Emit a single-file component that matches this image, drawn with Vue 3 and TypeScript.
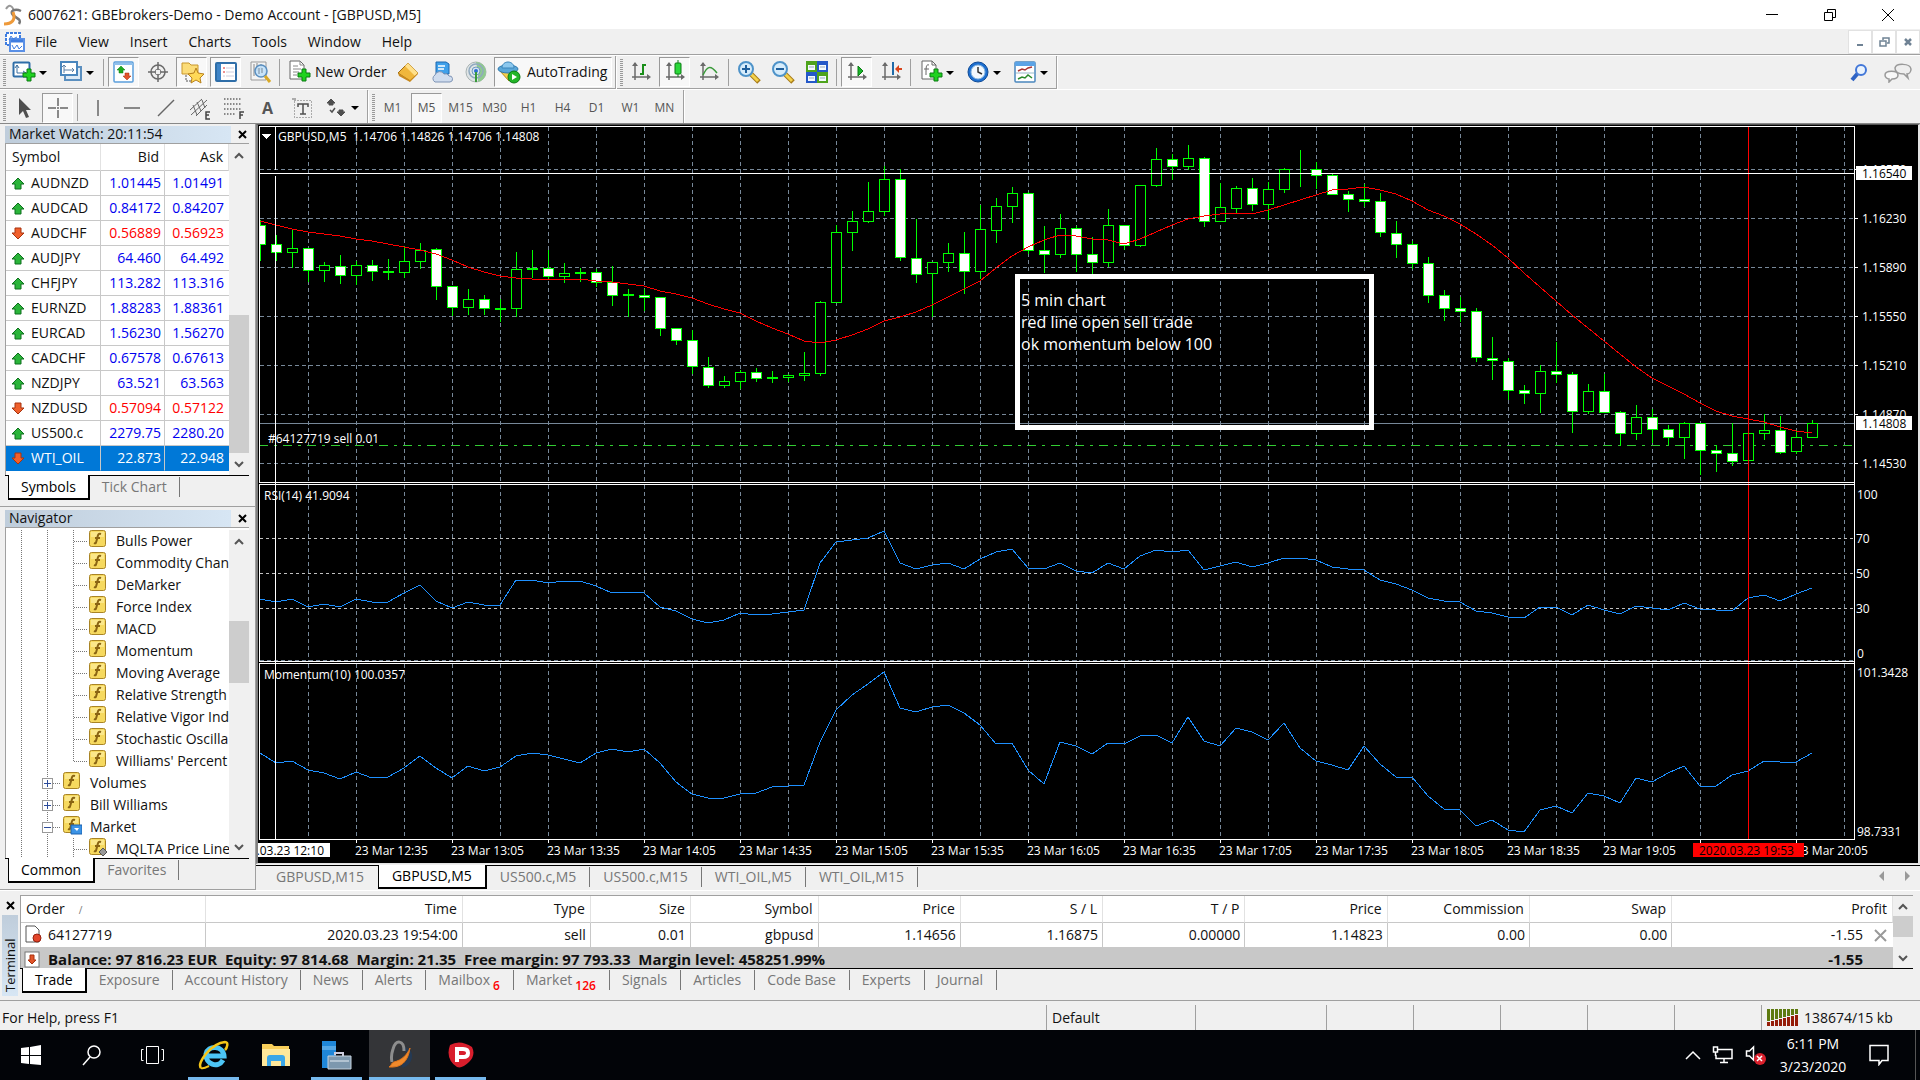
<script setup lang="ts">
type Tool = { icon?: string; label?: string; text?: string; pressed?: boolean; drop?: boolean; sep?: boolean; name?: string }

const axes = '<path d="M6 3v17M3 17h17" stroke="#6a6a6a" stroke-width="1.500"/><path d="M3 6l3-4 3 4zM18 14l4 3-4 3z" fill="#6a6a6a"/>'
const plus = '<path d="M15 9h4v4h4v4h-4v4h-4v-4h-4v-4h4z" fill="#1fd21f" stroke="#0a7a12"/>'
const icons: Record<string, string> = {
  newChart: '<rect x="1.500" y="2.500" width="16" height="14" rx="1" fill="#fff" stroke="#2f6ea8" stroke-width="2"/><path d="M5 5v8h9M3 8l2-3 2 3M11 11l3 2-3 2" fill="none" stroke="#3b6f9f"/>' + plus,
  profiles: '<rect x="6" y="7" width="16" height="13" fill="#dce9f5" stroke="#5b8fbf" stroke-width="2"/><rect x="2" y="2" width="16" height="13" fill="#fff" stroke="#4a86bd" stroke-width="2"/><path d="M5 5v8M5 10h10M3 7l2-2 2 2M13 8l2 2-2 2" fill="none" stroke="#5b7fa5"/>',
  market: '<rect x="2" y="2" width="19" height="20" rx="1" fill="#fff" stroke="#5b9fdc" stroke-width="1.500"/><path d="M2 4h19" stroke="#8fc0ec" stroke-width="2"/><path d="M9 6l4 4h-2v3H7v-3H5z" fill="#1faa1f" stroke="#0a7a12" stroke-width=".5"/><path d="M15 20l-4-4h2v-3h4v3h2z" fill="#e2532a" stroke="#a02a0a" stroke-width=".5"/>',
  target: '<circle cx="12" cy="12" r="7" fill="none" stroke="#6a6a6a" stroke-width="1.500"/><circle cx="12" cy="12" r="3" fill="none" stroke="#888"/><path d="M12 2v8M12 14v8M2 12h8M14 12h8" stroke="#6a6a6a" stroke-width="1.500"/>',
  navigator: '<path d="M2 3h7l2 2h7v9H2z" fill="#fbdc78" stroke="#c8962c"/><path d="M6 15v6h6" fill="none" stroke="#555" stroke-dasharray="2 1"/><path d="M16 8l2 5 6 1-4 4 1 5-5-3-5 3 1-5-4-4 6-1z" fill="#ffd957" stroke="#b9811c"/>',
  terminal: '<rect x="2" y="3" width="20" height="18" rx="1" fill="#fff" stroke="#2f6ea8" stroke-width="2"/><path d="M3 4h4v16H3z" fill="#3f85c8"/><path d="M9 8h2M9 12h2" stroke="#d22"/><path d="M12 8h8M12 12h8M12 16h8M9 16h2" stroke="#ccd"/>',
  tester: '<path d="M3 2h15v18H3z" fill="#f4f4f4" stroke="#999"/><path d="M6 4v12M9 3v8M13 4v6" stroke="#888"/><circle cx="13" cy="11" r="6" fill="#bfe0fa" fill-opacity=".85" stroke="#5a8fc0" stroke-width="1.500"/><path d="M11 8v6M14 8v5" stroke="#789"/><path d="M17 16l5 6" stroke="#d8a928" stroke-width="3"/>',
  newOrder: '<path d="M3 1h10l4 4v14H3z" fill="#fff" stroke="#666"/><path d="M13 1v4h4M6 6h5M6 9h8M6 12h6M6 15h4" fill="none" stroke="#888"/>' + plus,
  book: '<path d="M2 13L12 3l10 10-8 8z" fill="#f0b73c" stroke="#a36d12"/><path d="M12 3l10 10-3 3L9 6z" fill="#ffe08a"/><path d="M2 13l1 3 11 6 8-8v-1l-8 7z" fill="#c98a1e"/>',
  cloud: '<path d="M6 2h10l3 2v10H6z" fill="#3fa0ea" stroke="#1c68b0"/><path d="M8 6h7M8 9h6" stroke="#fff" stroke-width="1.500"/><path d="M5 22a4 4 0 0 1 0-7 5 5 0 0 1 9-1 4 4 0 0 1 5 2 3 3 0 0 1 1 6z" fill="#cfdcee" stroke="#7d93b5"/>',
  signal: '<circle cx="12" cy="12" r="10" fill="#dfe4e6" stroke="#aab4b4"/><path d="M12 2a10 10 0 0 1 2 19.800V12z" fill="#8fca8f"/><circle cx="12" cy="11" r="7" fill="none" stroke="#8fa9bf" stroke-width="1.500"/><circle cx="12" cy="11" r="4" fill="#d5e2f2" stroke="#6e9abf"/><circle cx="12" cy="11" r="2" fill="#2b6fd0"/><path d="M12 12v10" stroke="#3a9a3a" stroke-width="2"/>',
  auto: '<path d="M3 11l9 10 8-9z" fill="#f6cf4b" stroke="#b58a1c"/><ellipse cx="11" cy="9" rx="10" ry="4" fill="#5aa7d8" stroke="#2e78ae"/><path d="M5 8c0-8 12-8 12 0z" fill="#8cc8ee" stroke="#3b86bb"/><circle cx="17" cy="17" r="6" fill="#22b528" stroke="#0a7a12"/><path d="M15 14l5 3-5 3z" fill="#fff"/>',
  bars: axes + '<path d="M14 4v11M14 5h3M11 14h3" stroke="#1a8f1a" stroke-width="2"/>',
  candle: axes + '<path d="M15 0v17" stroke="#0a7a12"/><rect x="12" y="3" width="6" height="11" rx="1" fill="#2bd83a" stroke="#0a7a12"/>',
  line: axes + '<path d="M6 15C10 7 13 4 20 13" fill="none" stroke="#3a9a3a" stroke-width="1.500"/>',
  zoomIn: '<path d="M14 14l8 8" stroke="#a77b17" stroke-width="5"/><path d="M14 14l7 7" stroke="#f4d24c" stroke-width="3"/><circle cx="9" cy="9" r="7" fill="#d6ecfb" stroke="#4e93c9" stroke-width="2"/><path d="M9 5v8M5 9h8" stroke="#1f5f9c" stroke-width="2"/>',
  zoomOut: '<path d="M14 14l8 8" stroke="#a77b17" stroke-width="5"/><path d="M14 14l7 7" stroke="#f4d24c" stroke-width="3"/><circle cx="9" cy="9" r="7" fill="#d6ecfb" stroke="#4e93c9" stroke-width="2"/><path d="M5 9h8" stroke="#1f5f9c" stroke-width="2"/>',
  tile: '<path d="M1 1h11v11H1zM12 12h11v11H12z" fill="#4ea31c"/><path d="M12 1h11v11H12zM1 12h11v11H1z" fill="#2458c8"/><path d="M3 5h7v5H3zM14 5h7v5h-7zM3 16h7v5H3zM14 16h7v5h-7z" fill="#f4faff"/><path d="M4 7h5M15 7h5M4 18h5M15 18h5" stroke="#9ab"/>',
  scroll: axes + '<path d="M13 6l5 5-5 5z" fill="#18b52a" stroke="#0a7a12"/>',
  shift: axes + '<path d="M14 2v13" stroke="#1e6aa8" stroke-width="2"/><path d="M16 9l4-4v3h3v2h-3v3z" fill="#d8441c"/>',
  indicator: '<path d="M3 1h10l4 4v14H3z" fill="#fff" stroke="#666"/><path d="M13 1v4h4M10 5c-3-1-3 2-3 10M5 9h5" fill="none" stroke="#666"/>' + plus,
  clock: '<circle cx="12" cy="12" r="10" fill="#1d6fd0" stroke="#0e4a96"/><circle cx="12" cy="12" r="7" fill="#f2f8fd" stroke="#8ab8e0"/><path d="M12 7v5l4 2" fill="none" stroke="#333" stroke-width="1.500"/>',
  template: '<rect x="2" y="2" width="20" height="20" rx="1" fill="#fff" stroke="#4a86bd" stroke-width="1.500"/><path d="M2 4h20" stroke="#5ba3e6" stroke-width="4"/><path d="M3 13h18" stroke="#9bc"/><path d="M5 11l4-2 3 1 3-2 4-1" fill="none" stroke="#a33" stroke-width="1.500"/><path d="M5 19l4-2 3 1 3-3 4 3" fill="none" stroke="#2a8a2a" stroke-width="1.500"/>',
  cursor: '<path d="M7 2v17l4-4 3 7 3-1-3-7h5z" fill="#4f4f4f"/>',
  cross: '<path d="M12 2v8M12 14v8M2 12h8M14 12h8M12 11v2" stroke="#666" stroke-width="1.500"/>',
  vline: '<path d="M12 4v16" stroke="#666" stroke-width="1.500"/>',
  hline: '<path d="M4 12h16" stroke="#666" stroke-width="1.500"/>',
  trend: '<path d="M4 20L20 4" stroke="#666" stroke-width="1.500"/>',
  channel: '<path d="M2 14L14 3M3 19L19 4M8 20l11-11M5 9l4 10M9 6l4 9M14 4l3 8" stroke="#666"/><path d="M22 16h-4v7h4M18 19h3" fill="none" stroke="#444" stroke-width="1.500"/>',
  fibo: '<path d="M2 3h18M2 8h18M2 13h18M2 18h12" stroke="#666" stroke-width="1.500" stroke-dasharray="1.500 1.500"/><path d="M22 16h-4v7M18 19h3" fill="none" stroke="#444" stroke-width="1.500"/>',
  label: '<rect x="4.500" y="4.500" width="17" height="17" fill="none" stroke="#666" stroke-dasharray="1 2"/><path d="M8 11V8h10v3M13 8v10M10 18h6" fill="none" stroke="#4f4f4f" stroke-width="1.500"/><path d="M2 3h4" stroke="#666"/>',
  arrows: '<path d="M7 3l4 4H9v2H5V7H3zM17 20l-4-4h2v-2h4v2h2z" fill="#4f4f4f" stroke="#4f4f4f"/><path d="M6 14l2 2 3-4" fill="none" stroke="#4f4f4f" stroke-width="1.500"/>',
}
const bar1: Tool[] = [
  { icon: 'newChart', drop: true, name: 'New chart' }, { icon: 'profiles', drop: true, name: 'Profiles' }, { sep: true },
  { icon: 'market', pressed: true, name: 'Market Watch' }, { icon: 'target', name: 'Data Window' },
  { icon: 'navigator', pressed: true, name: 'Navigator' }, { icon: 'terminal', pressed: true, name: 'Terminal' },
  { icon: 'tester', name: 'Strategy Tester' }, { sep: true },
  { icon: 'newOrder', label: 'New Order' }, { icon: 'book', name: 'MetaEditor' }, { icon: 'cloud', name: 'Hosting' },
  { icon: 'signal', name: 'Signals' }, { icon: 'auto', label: 'AutoTrading', pressed: true },
]
const bar2: Tool[] = [
  { icon: 'bars', name: 'Bar chart' }, { icon: 'candle', pressed: true, name: 'Candlesticks' }, { icon: 'line', name: 'Line chart' }, { sep: true },
  { icon: 'zoomIn', name: 'Zoom in' }, { icon: 'zoomOut', name: 'Zoom out' }, { icon: 'tile', name: 'Tile windows' }, { sep: true },
  { icon: 'scroll', pressed: true, name: 'Auto scroll' }, { icon: 'shift', name: 'Chart shift' }, { sep: true },
  { icon: 'indicator', drop: true, name: 'Indicators' }, { icon: 'clock', drop: true, name: 'Periods' }, { icon: 'template', drop: true, name: 'Templates' },
]
const bar3: Tool[] = [
  { icon: 'cursor', name: 'Cursor' }, { icon: 'cross', pressed: true, name: 'Crosshair' }, { sep: true },
  { icon: 'vline', name: 'Vertical line' }, { icon: 'hline', name: 'Horizontal line' }, { icon: 'trend', name: 'Trendline' },
  { icon: 'channel', name: 'Equidistant channel' }, { icon: 'fibo', name: 'Fibonacci' }, { text: 'A', name: 'Text' },
  { icon: 'label', name: 'Text label' }, { icon: 'arrows', drop: true, name: 'Arrows' },
]
const bar4: Tool[] = ['M1', 'M5', 'M15', 'M30', 'H1', 'H4', 'D1', 'W1', 'MN'].map(t => ({ text: t, name: t, pressed: t === 'M5' }))
const toolRows = [[bar1, bar2], [bar3, bar4]]
const menus = ['File', 'View', 'Insert', 'Charts', 'Tools', 'Window', 'Help']

const quotes: [string, string, string, boolean][] = [
  ['AUDNZD', '1.01445', '1.01491', true], ['AUDCAD', '0.84172', '0.84207', true], ['AUDCHF', '0.56889', '0.56923', false],
  ['AUDJPY', '64.460', '64.492', true], ['CHFJPY', '113.282', '113.316', true], ['EURNZD', '1.88283', '1.88361', true],
  ['EURCAD', '1.56230', '1.56270', true], ['CADCHF', '0.67578', '0.67613', true], ['NZDJPY', '63.521', '63.563', true],
  ['NZDUSD', '0.57094', '0.57122', false], ['US500.c', '2279.75', '2280.20', true], ['WTI_OIL', '22.873', '22.948', false],
]
const tree = [
  ...['Bulls Power', 'Commodity Chan', 'DeMarker', 'Force Index', 'MACD', 'Momentum', 'Moving Average',
    'Relative Strength', 'Relative Vigor Ind', 'Stochastic Oscilla', "Williams' Percent"].map((t, i) => ({ t, kind: i === 10 ? 'last' : 'leaf' })),
  { t: 'Volumes', kind: 'plus' }, { t: 'Bill Williams', kind: 'plus' }, { t: 'Market', kind: 'minus' }, { t: 'MQLTA Price Line', kind: 'ex' },
]

// Candles, oldest first: high, body top, body bottom, low, and 1 for a falling bar.
const candles: number[][] = [
  [94,99,118,134,1],[109,118,126,134,1],[104,122,126,141,0],[122,122,144,155,1],[136,139,144,155,0],[129,140,149,157,1],[135,139,149,158,0],
  [134,139,145,154,1],[133,145,146,153,0],[120,135,146,151,0],[117,124,135,142,0],[122,123,160,173,1],[160,160,181,189,1],[163,173,181,188,0],
  [169,173,182,188,1],[173,182,183,195,0],[126,143,182,190,0],[124,142,143,151,0],[124,142,150,152,1],[137,147,150,156,0],[142,146,147,155,0],
  [143,146,156,160,1],[140,156,169,179,1],[163,168,169,190,0],[163,169,171,184,1],[171,171,202,209,1],[202,202,214,218,1],[204,214,240,247,1],
  [231,241,259,261,1],[250,255,259,261,0],[244,246,255,262,0],[242,246,252,255,1],[245,251,252,256,0],[248,249,251,255,0],[226,247,249,254,0],
  [175,176,247,249,0],[99,106,176,176,0],[85,95,106,124,0],[56,85,95,96,0],[40,53,85,89,0],[43,53,131,134,1],[93,132,148,156,1],
  [136,136,147,190,0],[117,127,136,145,0],[106,127,145,167,1],[79,103,145,152,0],[72,80,104,116,0],[61,67,80,96,0],[66,67,124,127,1],
  [100,124,128,146,1],[88,102,128,131,0],[100,102,128,145,1],[111,128,136,149,1],[83,99,136,140,0],[99,99,119,123,1],[59,59,119,120,0],
  [22,33,59,60,0],[28,33,40,53,1],[19,32,40,43,0],[31,32,95,100,1],[57,81,95,95,0],[60,62,82,86,0],[52,62,78,84,1],[56,63,78,93,0],
  [42,43,63,66,0],[24,43,43,60,0],[36,43,49,62,1],[47,49,68,68,1],[65,68,73,85,1],[58,73,75,80,1],[67,75,106,110,1],[95,107,118,131,1],
  [115,118,137,142,1],[131,137,169,176,1],[164,169,182,194,1],[171,182,185,195,1],[182,185,231,235,1],[211,232,234,253,1],[232,235,264,273,1],
  [259,264,267,277,1],[239,245,267,286,0],[216,245,248,256,1],[246,248,285,306,1],[258,265,285,287,0],[248,265,286,286,1],[285,286,307,319,1],
  [279,291,307,313,0],[283,291,303,316,1],[299,303,311,318,1],[296,297,311,332,0],[297,297,324,348,1],[319,324,327,345,1],[297,327,335,339,1],
  [307,307,334,334,0],[288,304,307,313,0],[290,304,326,327,1],[304,311,325,327,0],[294,297,311,311,0],
]
// Indicator samples, one per bar, in thirds of a pixel from the top of their scale.
const ma = [304,316,326,337,343,349,357,364,373,382,391,403,421,440,455,469,473,476,478,478,478,482,487,491,499,514,523,535,553,568,580,602,625,643,664,669,661,646,627,603,592,577,555,530,508,482,445,408,382,360,346,349,358,361,373,358,337,315,298,289,283,280,283,271,254,240,226,211,208,200,209,223,244,271,289,311,343,374,415,460,500,542,584,624,664,703,740,773,799,823,850,872,889,898,907,922,934,938]
const rsi = [358,367,358,382,373,382,358,367,367,340,316,363,385,367,376,376,301,301,310,304,304,319,340,337,340,381,394,418,430,421,400,406,403,397,390,249,187,181,173,154,249,268,256,250,268,237,217,208,264,268,250,272,280,250,268,227,211,217,211,271,259,247,262,250,235,235,241,262,268,269,299,313,329,355,364,367,393,398,411,415,382,382,406,376,391,403,379,385,391,370,387,391,394,353,346,364,343,323]
const momentum = [820,850,844,871,880,898,877,895,891,865,829,865,894,859,874,861,829,820,826,838,850,818,808,817,808,850,907,941,955,955,943,940,922,919,915,785,691,645,612,577,684,697,682,676,700,736,793,790,871,913,787,798,823,790,793,769,766,790,712,784,799,745,755,781,730,804,842,856,871,799,851,892,892,949,988,991,1039,1021,1051,1055,991,979,1000,940,949,970,895,907,880,859,919,919,884,874,844,847,847,820]
const barStep = 16
const path = (v: number[], top: number) => v.map((p, i) => `${1 + i * barStep},${Math.round(p / 3 + top)}`).join(' ')
const gridX = Array.from({ length: 33 }, (_, i) => 49 + i * 48)
const prices: [string, number][] = [['1.16570', 43], ['1.16230', 92], ['1.15890', 141], ['1.15550', 190], ['1.15210', 239], ['1.14870', 288], ['1.14530', 337]]
const panes = [[0, 356], [358, 177], [537, 176]]
const times = Array.from({ length: 16 }, (_, i) => {
  const m = 12 * 60 + 35 + i * 30
  return { x: 97 + i * 96, t: i === 14 ? '' : `23 Mar ${Math.floor(m / 60)}:${String(m % 60).padStart(2, '0')}` }
})
const chartTabs = ['GBPUSD,M15', 'GBPUSD,M5', 'US500.c,M5', 'US500.c,M15', 'WTI_OIL,M5', 'WTI_OIL,M15']
const orderHead = ['Time', 'Type', 'Size', 'Symbol', 'Price', 'S / L', 'T / P', 'Price', 'Commission', 'Swap']
const orderRow = ['2020.03.23 19:54:00', 'sell', '0.01', 'gbpusd', '1.14656', '1.16875', '0.00000', '1.14823', '0.00', '0.00']
const bottomTabs: [string, string?][] = [['Trade'], ['Exposure'], ['Account History'], ['News'], ['Alerts'], ['Mailbox', '6'], ['Market', '126'], ['Signals'], ['Articles'], ['Code Base'], ['Experts'], ['Journal']]
</script>

<template>
  <div class="app">
    <header class="titlebar">
      <svg width="20" height="22" viewBox="0 0 20 22"><path d="M3 5c3-5 6-4 8 2" fill="none" stroke="#999" stroke-width="2" /><path d="M18 7c-6-3-12 0-8 4s9 4 6 9" fill="none" stroke="#777" stroke-width="2.500" /><path d="M1 20c8 0 12-4 9-12" fill="none" stroke="#ee9a3a" stroke-width="3" /></svg>
      <h1>6007621: GBEbrokers-Demo - Demo Account - [GBPUSD,M5]</h1>
      <div class="winbtns">
        <button aria-label="Minimize"><svg width="14" height="14"><path d="M1 6.500h12" stroke="#000" /></svg></button>
        <button aria-label="Restore"><svg width="14" height="14"><path d="M1.500 4.500h8v8h-8zM4.500 4V1.500h8v8H10" fill="none" stroke="#000" /></svg></button>
        <button aria-label="Close"><svg width="14" height="14"><path d="M1 1l12 12M13 1L1 13" stroke="#000" /></svg></button>
      </div>
    </header>
    <nav class="menubar">
      <svg width="22" height="22" viewBox="0 0 22 22"><rect x="2" y="2" width="14" height="12" fill="#fff" stroke="#3f7de0" stroke-width="2" stroke-dasharray="3 1" /><rect x="6" y="8" width="14" height="12" fill="#fff" stroke="#5a90e6" stroke-width="2" /><path d="M7 10h12" stroke="#3f7de0" stroke-width="3" /><path d="M8 14l2 4 3-4 2 4 3-3M5 9l2-4 2 3 4-2" fill="none" stroke="#3f7de0" /></svg>
      <a v-for="m in menus" :key="m" href="#">{{ m }}</a>
      <div class="mdi">
        <button aria-label="Minimize chart"><svg width="12" height="12"><path d="M3 9h6" stroke="#6f8294" stroke-width="2" /></svg></button>
        <button aria-label="Restore chart"><svg width="12" height="12"><path d="M2 5h6v5H2zM5 4V2h6v5H9" fill="none" stroke="#6f8294" stroke-width="1.500" /></svg></button>
        <button aria-label="Close chart"><svg width="12" height="12"><path d="M3 3l6 6M9 3L3 9" stroke="#6f8294" stroke-width="2.500" /></svg></button>
      </div>
    </nav>
    <div v-for="(row, r) in toolRows" :key="r" class="toolrow">
      <div v-for="(bar, b) in row" :key="b" class="tools">
        <i class="grip"></i>
        <template v-for="(t, i) in bar" :key="i">
          <i v-if="t.sep" class="sep"></i>
          <button v-else :aria-label="t.name" :class="{ pressed: t.pressed, drop: t.drop, wide: t.label, glyph: t.text === 'A' }">
            <svg v-if="t.icon" width="24" height="24" viewBox="0 0 24 24" v-html="icons[t.icon]"></svg>
            <span v-if="t.label">{{ t.label }}</span>
            <template v-if="t.text">{{ t.text }}</template>
            <i v-if="t.drop" class="caret"></i>
          </button>
        </template>
      </div>
      <div v-if="r === 0" class="toolright">
        <button aria-label="Search"><svg width="18" height="18" viewBox="0 0 18 18"><path d="M2 16l6-7" stroke="#2f63c4" stroke-width="4" /><circle cx="11" cy="6" r="5" fill="#eaf3fd" stroke="#4277d8" stroke-width="2" /></svg></button>
        <button aria-label="Chat"><svg width="28" height="20" viewBox="0 0 28 20"><path d="M11 5c1-5 15-5 16 1 0 3-2 5-4 5l1 4-4-4c-6 0-9-2-9-6z" fill="#eee" stroke="#999" stroke-width="1.500" /><path d="M1 12c0-5 13-5 13 0 0 3-3 4-6 4l-3 3v-3c-2 0-4-2-4-4z" fill="#f8f8f8" stroke="#999" stroke-width="1.500" /></svg></button>
      </div>
    </div>

    <main class="workspace">
      <aside>
        <section class="panel">
          <div class="phead"><h2>Market Watch: 20:11:54</h2><button aria-label="Close Market Watch"><svg width="9" height="9"><path d="M1 1l7 7M8 1L1 8" stroke="#000" stroke-width="2" /></svg></button></div>
          <div class="pbody">
            <table class="quotes">
              <thead><tr><th>Symbol</th><th>Bid</th><th>Ask</th></tr></thead>
              <tbody>
                <tr v-for="q in quotes" :key="q[0]" :class="{ down: !q[3], sel: q[0] === 'WTI_OIL' }">
                  <td><svg width="14" height="13" viewBox="0 0 14 13"><path v-if="q[3]" d="M7 1l6 6h-3v5H4V7H1z" fill="#2bb53a" stroke="#0c6e1c" /><path v-else d="M7 12l6-6h-3V1H4v5H1z" fill="#f0602c" stroke="#a8330e" /></svg>{{ q[0] }}</td>
                  <td>{{ q[1] }}</td><td>{{ q[2] }}</td>
                </tr>
              </tbody>
            </table>
            <div class="scroll"><button aria-label="Scroll up"><svg width="10" height="7"><path d="M1 6l4-4 4 4" fill="none" stroke="#555" stroke-width="2" /></svg></button><i class="track"><b class="thumb t1"></b></i><button aria-label="Scroll down"><svg width="10" height="7"><path d="M1 1l4 4 4-4" fill="none" stroke="#555" stroke-width="2" /></svg></button></div>
          </div>
          <div class="tabs"><button class="on">Symbols</button><button>Tick Chart</button></div>
        </section>
        <section class="panel nav">
          <div class="phead"><h2>Navigator</h2><button aria-label="Close Navigator"><svg width="9" height="9"><path d="M1 1l7 7M8 1L1 8" stroke="#000" stroke-width="2" /></svg></button></div>
          <div class="pbody">
            <ul class="tree">
              <li v-for="n in tree" :key="n.t">
                <svg :width="n.kind === 'plus' || n.kind === 'minus' ? 56 : 82" height="22" shape-rendering="crispEdges" fill="none" stroke="#777" stroke-dasharray="1 1">
                  <path d="M15.500 0v22M41.500 0v22" />
                  <template v-if="n.kind === 'plus' || n.kind === 'minus'">
                    <path d="M47 11.500h8" />
                    <rect x="36.500" y="6.500" width="10" height="10" fill="#fff" stroke="#999" stroke-dasharray="none" />
                    <path :d="n.kind === 'plus' ? 'M38 11.500h7M41.500 8v7' : 'M38 11.500h7'" stroke="#2b4b9b" stroke-dasharray="none" />
                  </template>
                  <path v-else :d="n.kind === 'last' ? 'M67.500 0v11M68 11.500h13' : 'M67.500 0v22M68 11.500h13'" />
                </svg>
                <svg class="fn" width="20" height="20" viewBox="0 0 20 20">
                  <rect x="1.500" y="1.500" width="16" height="16" rx="2" fill="#f6d95f" stroke="#a98425" /><path d="M3 3h13v5H3z" fill="#fff0a6" opacity=".6" />
                  <path d="M13 5c-3-1-3 1-4 5s-1 5-3 4M7 9h5" fill="none" stroke="#8a6412" stroke-width="2" />
                  <path v-if="n.kind === 'minus'" d="M9 10h11v9H9z" fill="#3b93e6" stroke="#1d63b0" /><path v-if="n.kind === 'minus'" d="M12 13h5l-2 3z" fill="#fff" />
                  <path v-if="n.kind === 'ex'" d="M15 11l4 4-4 4-4-4z" fill="#999" stroke="#555" />
                </svg>
                <span>{{ n.t }}</span>
              </li>
            </ul>
            <div class="scroll"><button aria-label="Scroll up"><svg width="10" height="7"><path d="M1 6l4-4 4 4" fill="none" stroke="#555" stroke-width="2" /></svg></button><i class="track"><b class="thumb t2"></b></i><button aria-label="Scroll down"><svg width="10" height="7"><path d="M1 1l4 4 4-4" fill="none" stroke="#555" stroke-width="2" /></svg></button></div>
          </div>
          <div class="tabs"><button class="on">Common</button><button>Favorites</button></div>
        </section>
      </aside>

      <section class="chartcol">
        <div class="chart">
          <div class="plots">
            <svg class="plot" width="100%" height="714" shape-rendering="crispEdges" fill="none">
              <g stroke="#778899" stroke-dasharray="4 3">
                <path v-for="x in gridX" :key="x" :d="`M${x + 0.5} 1V356M${x + 0.5} 359V535M${x + 0.5} 538V713`" />
                <line v-for="p in prices" :key="p[0]" x1="1" x2="100%" :y1="p[1] + 0.5" :y2="p[1] + 0.5" />
                <line x1="1" x2="100%" y1="534.500" y2="534.500" />
              </g>
              <line v-for="y in [412, 447, 482]" :key="y" x1="1" x2="100%" :y1="y + 0.5" :y2="y + 0.5" stroke="#c0c0c0" stroke-dasharray="3 3" />
              <line x1="0" x2="100%" y1="297.500" y2="297.500" stroke="#778899" />
              <line x1="0" x2="100%" y1="319.500" y2="319.500" stroke="#32cd32" stroke-dasharray="9 6 3 6" />
              <g stroke="#0f0">
                <g v-for="(c, i) in candles" :key="i">
                  <path :d="`M${1.5 + i * barStep} ${c[0]}V${c[1]}M${1.5 + i * barStep} ${c[2]}V${c[3] + 1}`" />
                  <rect :x="i * barStep - 3.5" :y="c[1] + 0.5" width="10" :height="c[2] - c[1]" :fill="c[4] ? '#fff' : '#000'" />
                </g>
              </g>
              <polyline :points="path(ma, -6)" stroke="#f00" />
              <polyline :points="path(rsi, 354)" stroke="#1e90ff" />
              <polyline :points="path(momentum, 354)" stroke="#1e90ff" />
              <path d="M1489.500 0V713" stroke="#f00" />
              <line x1="0" x2="100%" y1="47.500" y2="47.500" stroke="#fff" />
              <path d="M16.500 0V44M16.500 50V713" stroke="#fff" />
              <g stroke="#fff">
                <template v-for="p in panes" :key="p[0]">
                  <line x1="0" x2="100%" :y1="p[0] + 0.5" :y2="p[0] + 0.5" /><line x1="0" x2="100%" :y1="p[0] + p[1] + 0.5" :y2="p[0] + p[1] + 0.5" />
                  <path :d="`M.5 ${p[0]}v${p[1]}`" />
                </template>
              </g>
              <path d="M3 8h9l-4 5h-1z" fill="#fff" />
              <g class="ct">
                <text x="19" y="15">GBPUSD,M5&nbsp; 1.14706 1.14826 1.14706 1.14808</text>
                <text x="9" y="317">#64127719 sell 0.01</text>
                <text x="5" y="374">RSI(14) 41.9094</text>
                <text x="5" y="553">Momentum(10) 100.0357</text>
              </g>
            </svg>
            <svg class="scale" width="63" height="714" shape-rendering="crispEdges">
              <g class="ct">
                <template v-for="p in prices" :key="p[0]"><path :d="`M0 ${p[1] + 0.5}h3`" stroke="#fff" /><text x="7" :y="p[1] + 5">{{ p[0] }}</text></template>
                <text x="2" y="373">100</text><text x="1" y="417">70</text><text x="1" y="452">50</text><text x="1" y="487">30</text><text x="2" y="532">0</text>
                <text x="2" y="551">101.3428</text><text x="2" y="710">98.7331</text>
              </g>
              <path d="M1 40h56v14H1zM1 290h56v14H1z" fill="#fff" />
              <g class="ct dark"><text x="7" y="52">1.16540</text><text x="7" y="302">1.14808</text></g>
            </svg>
            <div class="note">5 min chart<br>red line open sell trade<br>ok momentum below 100</div>
          </div>
          <svg class="timeaxis" width="100%" height="23" shape-rendering="crispEdges">
            <g class="ct"><template v-for="t in times" :key="t.x"><path :d="`M${t.x + 3.5} 0v3`" stroke="#fff" /><text v-if="t.t" :x="t.x + 2" y="15">{{ t.t }}</text></template></g>
            <path d="M0 3h74v14H0z" fill="#fff" /><path d="M1437 3h111v14h-111z" fill="#f00" />
            <g class="ct dark"><text x="68" y="15" text-anchor="end">2020.03.23 12:10</text><text x="1443" y="15">2020.03.23 19:53</text></g>
          </svg>
        </div>
        <div class="tabs charttabs">
          <button v-for="t in chartTabs" :key="t" :class="{ on: t === 'GBPUSD,M5' }">{{ t }}</button>
          <span class="tabnav"><svg width="32" height="10"><path d="M5 0v10L0 5zM26 0v10l5-5z" fill="#999" /></svg></span>
        </div>
      </section>
    </main>

    <section class="terminal">
      <div class="tside"><button aria-label="Close Terminal"><svg width="9" height="9"><path d="M1 1l7 7M8 1L1 8" stroke="#000" stroke-width="2" /></svg></button><span>Terminal</span></div>
      <div class="tmain">
        <div class="tbody">
          <table class="orders">
            <colgroup><col style="width:9.900%"><col style="width:13.700%"><col style="width:6.840%"><col style="width:5.340%"><col style="width:6.830%"><col v-for="i in 6" :key="i" style="width:7.600%"><col></colgroup>
            <thead><tr><th class="l">Order<span class="slash">/</span></th><th v-for="(h, i) in orderHead" :key="i">{{ h }}</th><th>Profit</th></tr></thead>
            <tbody>
              <tr><td class="l"><svg width="18" height="18" viewBox="0 0 18 18"><path d="M2 1h9l4 4v12H2z" fill="#fff" stroke="#555" /><circle cx="13" cy="13" r="4" fill="#e2452a" stroke="#96200e" /></svg>64127719</td><td v-for="(c, i) in orderRow" :key="i">{{ c }}</td><td class="profit">-1.55<button aria-label="Close order"><svg width="13" height="13"><path d="M1 1l11 11M12 1L1 12" stroke="#999" stroke-width="2" /></svg></button></td></tr>
              <tr class="bal"><td class="l" colspan="11"><svg width="18" height="17" viewBox="0 0 18 17"><rect x="1" y="1" width="14" height="15" fill="#fff" stroke="#777" /><path d="M8 13l4-4h-2V4H6v5H4z" fill="#e2552a" stroke="#a8330e" /></svg>Balance: 97 816.23 EUR&nbsp; Equity: 97 814.68&nbsp; Margin: 21.35&nbsp; Free margin: 97 793.33&nbsp; Margin level: 458251.99%</td><td class="profit">-1.55</td></tr>
            </tbody>
          </table>
          <div class="scroll"><button aria-label="Scroll up"><svg width="10" height="7"><path d="M1 6l4-4 4 4" fill="none" stroke="#555" stroke-width="2" /></svg></button><i class="track"><b class="thumb t3"></b></i><button aria-label="Scroll down"><svg width="10" height="7"><path d="M1 1l4 4 4-4" fill="none" stroke="#555" stroke-width="2" /></svg></button></div>
        </div>
        <div class="tabs"><button v-for="(t, i) in bottomTabs" :key="t[0]" :class="{ on: i === 0 }">{{ t[0] }}<sub v-if="t[1]">{{ t[1] }}</sub></button></div>
      </div>
    </section>

    <footer class="status">
      <span class="help">For Help, press F1</span><span class="w1">Default</span><span class="w2"></span><span v-for="i in 5" :key="i" class="w3"></span>
      <span class="traffic"><svg width="32" height="17" shape-rendering="crispEdges"><path v-for="i in 8" :key="i" :d="`M${i * 4 - 2.5} 0v${13 - i}`" stroke="#5d7a10" stroke-width="3" /><path v-for="i in 8" :key="i" :d="`M${i * 4 - 2.5} ${14 - i}V17`" stroke="#951c08" stroke-width="3" /></svg>138674/15 kb</span>
    </footer>

    <div class="taskbar">
      <button aria-label="Start"><svg width="22" height="20"><path d="M1 3l8-1v8H1zM10 2l11-2v10H10zM1 11h8v8l-8-1zM10 11h11v9l-11-1z" fill="#fff" /></svg></button>
      <button aria-label="Search"><svg width="22" height="22"><circle cx="13" cy="8" r="6" fill="none" stroke="#fff" stroke-width="1.500" /><path d="M9 13l-7 8" stroke="#fff" stroke-width="1.500" /></svg></button>
      <button aria-label="Task View"><svg width="26" height="20"><path d="M6.500 1.500h12v17h-12zM3.500 4.500h-2v11h2M21.500 4.500h2v11h-2" fill="none" stroke="#fff" /></svg></button>
      <button aria-label="Internet Explorer" class="run"><svg width="32" height="30" viewBox="0 0 32 30"><path d="M25 20c-5 9-18 4-17-6 2-9 17-9 18 2H10" fill="none" stroke="#4cc5f5" stroke-width="5" /><path d="M3 28C-2 23 14 3 27 2c4 0 2 6 0 8" fill="none" stroke="#f5c518" stroke-width="2.500" /><path d="M3 28c3 1 6-1 8-2" fill="none" stroke="#f5c518" stroke-width="2" /></svg></button>
      <button aria-label="File Explorer"><svg width="30" height="26"><path d="M1 2h10l2 2h15v20H1z" fill="#f8cf5a" /><path d="M1 7h28v17H1z" fill="#ffe89a" /><path d="M6 24v-8q0-3 3-3h12q3 0 3 3v8h-4v-5H10v5z" fill="#3ba7e8" /></svg></button>
      <button aria-label="Server Manager" class="run"><svg width="32" height="30"><path d="M1 1h14v27H1z" fill="#1f87d8" /><path d="M1 7h14M1 9h14" stroke="#8cc8f2" /><path d="M14 15v-2h8v3" fill="none" stroke="#ccd" stroke-width="2" /><path d="M7 16h23v13H7z" fill="#7d98ae" stroke="#c6d3de" /><path d="M9 21h19" stroke="#e8eef4" /></svg></button>
      <button aria-label="MetaTrader" class="run active"><svg width="32" height="30"><path d="M21 9c8 4 6 14-3 17" fill="none" stroke="#243a55" stroke-width="4" /><path d="M20 11C20 0 12-1 9 9c-2 6-2 9-1 13" fill="none" stroke="#8d8d8d" stroke-width="3" /><path d="M5 27c3-2 2-4 5-5 8-2 13-7 16-14-2 14-9 20-21 19z" fill="#f08a2c" stroke="#e0761c" /></svg></button>
      <button aria-label="P" class="run"><svg width="28" height="28"><path d="M3 4Q13-2 25 6q4 8-3 15-7 7-12 5Q-2 18 3 4z" fill="#d81e2c" /><path d="M10 21V8h6q5 0 5 4t-5 4h-4" fill="none" stroke="#fff" stroke-width="4" /></svg></button>
      <div class="tray">
        <svg width="16" height="10"><path d="M1 9l7-7 7 7" fill="none" stroke="#fff" stroke-width="1.500" /></svg>
        <svg width="22" height="18"><path d="M6 3.500h14v9H4V9M12 13v3M8 16.500h8M1.500 1v5h4V1zM3.500 6v4" fill="none" stroke="#fff" stroke-width="1.500" /></svg>
        <svg width="22" height="20"><path d="M1.500 6v5h3l4 4V2L4.500 6z" fill="none" stroke="#fff" stroke-width="1.500" /><circle cx="15" cy="14" r="6" fill="#d9202c" /><path d="M12 11l5 5M17 11l-5 5" stroke="#fff" stroke-width="1.500" /></svg>
        <time><span>6:11 PM</span><span>3/23/2020</span></time>
        <svg width="20" height="22"><path d="M1 1.500h18v15h-6l-3 4v-4H1z" fill="none" stroke="#fff" stroke-width="1.500" /></svg>
        <i></i>
      </div>
    </div>
  </div>
</template>

<style>
body { margin: 0; background: #f0f0f0; }
</style>
<style scoped>
.app { display: flex; flex-direction: column; min-height: 100vh; overflow: hidden; background: #f0f0f0; color: #111; font: 14px/20px "Open Sans", "Noto Sans", sans-serif; }
.app * { box-sizing: border-box; }
button { display: flex; align-items: center; justify-content: center; margin: 0; padding: 0; border: 0; background: none; color: inherit; font: inherit; flex: none; }
svg { display: block; flex: none; }
.titlebar { display: flex; align-items: center; height: 29px; padding-left: 3px; background: #fff; }
h1, h2 { margin: 0; font: inherit; }
h1 { margin-left: 5px; }
.winbtns { display: flex; margin-left: auto; margin-right: 3px; }
.winbtns button { width: 58px; height: 26px; }
.menubar { display: flex; align-items: center; height: 26px; padding-left: 4px; gap: 21px; border-bottom: 1px solid #a0a0a0; }
.menubar a { color: inherit; text-decoration: none; }
.menubar a:first-of-type { margin-left: -12px; }
.mdi { display: flex; margin-left: auto; }
.mdi button { width: 24px; height: 24px; background: #fff; border: 1px solid #e2e2e2; }
.toolrow { display: flex; height: 34px; border-top: 1px solid #fff; }
.tools { display: flex; align-items: center; height: 33px; border-right: 1px solid #a0a0a0; border-bottom: 1px solid #a0a0a0; box-shadow: 1px 1px #fff; }
.tools + .tools { margin-left: 1px; }
.toolrow + .toolrow .tools { padding-top: 2px; border-bottom: 0; }
.grip { width: 3px; height: 27px; margin: 0 2px 0 3px; background: repeating-linear-gradient(#999 0 1px, #f0f0f0 1px 2px); }
.sep { width: 1px; height: 27px; margin: 0 4px 0 1px; background: #a0a0a0; }
.tools button { width: 31px; height: 30px; margin-right: 3px; border: 1px solid transparent; color: #555; font-size: 12px; }
.tools button.glyph { font-weight: 700; font-size: 16px; }
.tools .pressed { background: #f8f8f8; border-color: #999 #fff #fff #999; }
.tools button.drop { width: 47px; margin-right: 0; gap: 3px; justify-content: flex-start; padding-left: 3px; }
.tools button.wide { width: 105px; justify-content: flex-start; padding-left: 2px; color: #111; font-size: 14px; gap: 4px; }
.tools button.wide.pressed { width: 118px; gap: 6px; }
.caret { border: 4px solid transparent; border-top-color: #000; margin-top: 5px; }
.toolright { display: flex; align-items: center; gap: 16px; margin-left: auto; margin-right: 8px; }

.workspace { display: flex; flex: 1 0 auto; border-top: 1px solid #888; }
aside { display: flex; flex-direction: column; width: 256px; flex: none; border-right: 1px solid #a0a0a0; }
.panel { padding: 1px 6px 5px 5px; border-bottom: 1px solid #a0a0a0; }
.nav { flex: 1; padding-top: 2px; }
.phead { display: flex; align-items: center; height: 18px; margin-right: -4px; }
.phead h2 { flex: 1; height: 17px; line-height: 16px; padding-left: 4px; background: linear-gradient(90deg, #bfcddb, #d7e6f4); }
.phead button { width: 22px; height: 16px; }
.pbody { display: flex; border: 1px solid #a0a0a0; border-bottom: 0; border-right: 0; background: #fff; }
.nav .pbody { height: 331px; padding-top: 2px; overflow: hidden; }
.quotes { flex: 1; border-collapse: separate; border-spacing: 0; table-layout: fixed; width: 222px; margin-bottom: 4px; }
.quotes th { height: 27px; padding: 0 5px; font-weight: 400; text-align: right; border-right: 1px solid #e2e2e2; border-bottom: 1px solid #c8c8c8; width: 64px; }
.quotes th:first-child { text-align: left; width: 95px; padding-left: 6px; }
.quotes td { height: 25px; padding: 0 3px; text-align: right; color: #0000f0; border-right: 1px solid #c8c8c8; border-bottom: 1px solid #c8c8c8; }
.quotes td:last-child { border-right: 0; padding-right: 5px; }
.quotes td:first-child { display: flex; align-items: center; gap: 6px; padding-left: 5px; color: #111; }
.quotes .down td:not(:first-child) { color: #f00; }
.quotes .sel td, .quotes .sel.down td:not(:first-child) { background: #0078d7; color: #fff; border-bottom-color: #0078d7; }
.scroll { display: flex; flex-direction: column; width: 20px; flex: none; background: #f0f0f0; }
.scroll button { height: 22px; }
.track { flex: 1; display: block; }
.thumb { display: block; background: #cdcdcd; }
.t1 { height: 138px; margin-top: 149px; }
.t2 { height: 62px; margin-top: 69px; }
.t3 { height: 21px; }
.tree { flex: 1; margin: 0; padding: 0; list-style: none; overflow: hidden; }
.tree li { display: flex; align-items: center; height: 22px; white-space: nowrap; }
.tree .fn { margin-top: -4px; }
.tree span { margin-left: 8px; }
.tabs { display: flex; height: 26px; border-top: 1px solid #000; padding-left: 3px; }
.tabs button { height: 20px; margin-top: 1px; padding: 0 12px; color: #777; border-right: 1px solid #777; }
.tabs button.on { height: 25px; margin-top: -1px; color: #000; background: #fff; border: 1px solid #000; border-top: 0; border-right-width: 2px; border-bottom-width: 2px; }

.chartcol { flex: 1; min-width: 0; display: flex; flex-direction: column; }
.chart { flex: 1; background: #000; border: 2px solid #808080; border-top: 1px solid #555; border-bottom: 1px solid #e3e3e3; border-right: 2px solid #e3e3e3; padding: 1px 0 0 1px; overflow: hidden; }
.plots { display: flex; position: relative; }
.plot { flex: 1; min-width: 0; border-right: 1px solid #fff; }
.ct { fill: #fff; font-size: 12px; }
.dark { fill: #000; }
.note { position: absolute; left: 756px; top: 148px; width: 359px; height: 156px; border: 5px solid #fff; padding: 10px 1px; color: #fff; font-size: 16px; line-height: 22px; }
.timeaxis { margin-left: -3px; }
.charttabs { height: 25px; margin-top: 1px; padding-left: 6px; }
.charttabs button { padding: 0 13px; }
.charttabs button:first-child { border-right: 0; padding: 0 14px; }
.charttabs button.on { height: 24px; }
.tabnav { margin: 5px 9px 0 auto; }

.terminal { display: flex; height: 111px; padding-top: 4px; border-top: 1px solid #fff; border-bottom: 1px solid #a0a0a0; }
.tside { width: 20px; display: flex; flex-direction: column; align-items: center; }
.tside button { height: 20px; width: 20px; }
.tside span { flex: 1; width: 16px; line-height: 16px; background: linear-gradient(#d7e6f4, #bfcddb); writing-mode: vertical-rl; transform: rotate(180deg); padding-top: 4px; font-size: 13px; margin: 0 0 4px; }
.tmain { flex: 1; min-width: 0; padding-right: 7px; }
.tbody { display: flex; height: 73px; overflow: hidden; border-top: 1px solid #a0a0a0; border-left: 1px solid #a0a0a0; background: #fff; }
.orders { flex: 1; table-layout: fixed; border-collapse: separate; border-spacing: 0; }
.orders th { height: 27px; font-weight: 400; text-align: right; padding: 0 5px; border-right: 1px solid #e2e2e2; border-bottom: 1px solid #c8c8c8; }
.orders td { height: 24px; text-align: right; padding: 0 4px; border-right: 1px solid #c8c8c8; white-space: nowrap; }
.orders .l { text-align: left; }
.orders td.l svg { display: inline-block; vertical-align: -3px; margin: 0 6px 0 -1px; }
.orders td.profit { border-right: 0; padding-right: 30px; position: relative; }
.profit button { position: absolute; right: 6px; top: 6px; }
.slash { margin-left: 14px; font-size: 10px; color: #777; }
.orders .bal td { background: #c8c8c8; font-weight: 700; font-size: 15px; border: 0; }
.tbody .scroll button { height: 20px; }
.terminal .tabs { padding-left: 2px; }
.terminal .tabs button { padding: 0 12px; }
.terminal .tabs button:nth-child(n+4) { padding-right: 13px; }
.terminal .tabs sub { align-self: flex-end; color: #f00; font-size: 12px; line-height: 8px; margin-left: 3px; font-weight: 600; }

.status { display: flex; height: 29px; padding: 4px 0 0; }
.status span { border-left: 1px solid #a0a0a0; padding-left: 5px; height: 25px; line-height: 25px; }
.status .help { flex: 1; border: 0; padding-left: 2px; }
.status .w1 { width: 149px; }
.status .w2 { width: 131px; }
.status .w3 { width: 87px; }
.status .traffic { display: flex; align-items: center; gap: 5px; width: 159px; }

.taskbar { display: flex; height: 50px; background: #020408; color: #fff; }
.taskbar button { width: 61px; height: 50px; }
.taskbar .run { border-bottom: 3px solid #76b9ed; padding-top: 3px; width: 51px; margin: 0 6px 0 5px; }
.taskbar .active { background: #343538; width: 61px; margin: 0 0 0 1px; }
.tray { margin-left: auto; display: flex; align-items: center; gap: 11px; }
.tray time { display: flex; flex-direction: column; align-items: center; line-height: 23px; width: 70px; }
.tray svg:last-of-type { margin-left: 10px; }
.tray i { width: 1px; height: 50px; background: #555; margin: 0 4px 0 15px; }
</style>
